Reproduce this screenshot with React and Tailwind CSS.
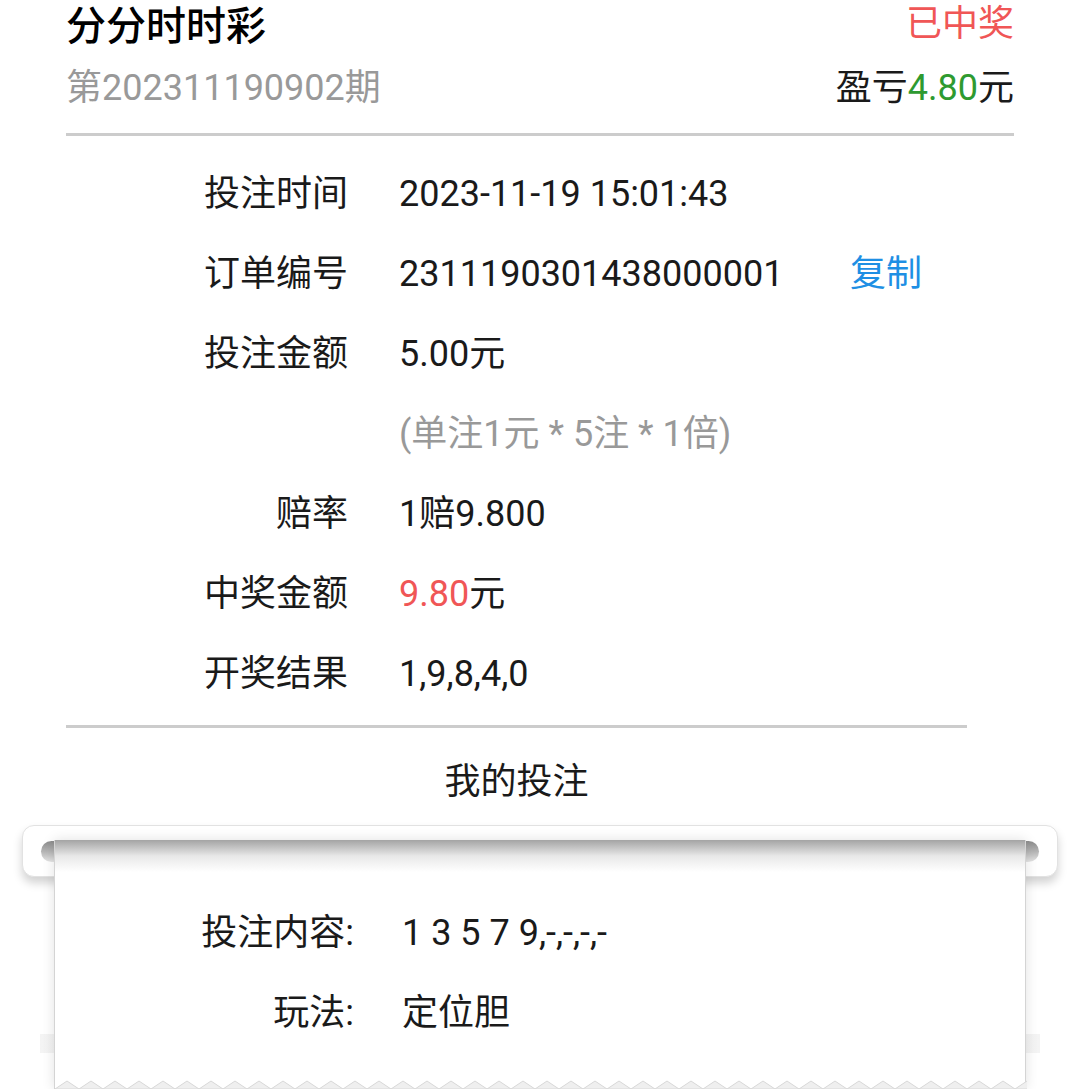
export default function App() {
  const rows = [
    { label: "投注时间", value: "2023-11-19 15:01:43" },
    { label: "订单编号", value: "2311190301438000001", copy: true },
    { label: "投注金额", value: "5.00元" },
    { label: "", value: "(单注1元 * 5注 * 1倍)", muted: true },
    { label: "赔率", value: "1赔9.800" },
    { label: "中奖金额", value: <><span className="text-[#f05656]">9.80</span>元</> },
    { label: "开奖结果", value: "1,9,8,4,0" },
  ];

  const teeth = [];
  for (let i = 0; i < 42; i++) {
    teeth.push(`${i * 24},14 ${i * 24 + 12},6`);
  }

  return (
    <div
      className="w-[1080px] h-[1089px] overflow-hidden bg-white text-[#1a1a1a]"
      style={{ fontFamily: 'Roboto, "Noto Sans CJK SC", sans-serif' }}
    >
      <div className="px-[66px]">
        <div className="flex justify-between">
          <div>
            <div className="h-[54px] flex items-center text-[40px] font-medium text-black leading-none">
              分分时时彩
            </div>
            <div className="h-[68px] flex items-center text-[36px] text-[#999] leading-none">
              第202311190902期
            </div>
          </div>
          <div className="flex flex-col items-end">
            <div className="h-[48px] flex items-center text-[36px] text-[#f05656] leading-none">
              已中奖
            </div>
            <div className="h-[80px] flex items-center text-[36px] leading-none">
              盈亏<span className="text-[#2e9a30]">4.80</span>元
            </div>
          </div>
        </div>
        <div className="mt-[5px] h-[3px] bg-[#cccccc]" />

        <div className="w-[901px]">
          <div className="mt-[18px]">
            {rows.map((r, i) => (
              <div key={i} className="h-[80px] flex items-center text-[36px] leading-none">
                <div className="w-[282px] text-right">{r.label}</div>
                <div className={`ml-[51px] ${r.copy ? "w-[451px]" : ""} ${r.muted ? "text-[#999]" : ""}`}>
                  {r.value}
                </div>
                {r.copy && <div className="text-[#1e8fe4]">复制</div>}
              </div>
            ))}
          </div>
          <div className="mt-[11px] h-[3px] bg-[#cccccc]" />
          <div className="h-[97px] pt-[11px] flex items-center justify-center text-[36px] leading-none">
            我的投注
          </div>
        </div>
      </div>

      <div className="relative px-[22px]">
        <div className="h-[52px] rounded-[12px] border border-[#e2e2e2] bg-white shadow-[0_6px_10px_rgba(0,0,0,0.18)] pt-[15px] px-[18px]">
          <div className="h-[21px] rounded-full bg-gradient-to-b from-[#8c8c8c] via-[#b5b5b5] to-[#e6e6e6]" />
        </div>
        <div className="absolute left-[40px] right-[40px] top-[209px] h-[19px] bg-gradient-to-r from-[#f4f4f4] via-[#d9d9d9] to-[#f4f4f4]" />

        <div className="relative z-10 -mt-[37px] mx-[32px] h-[249px] bg-white border-l border-r border-[#d4d4d4] shadow-[0_0_12px_rgba(0,0,0,0.12)] flex flex-col">
          <div className="h-[32px] -mb-[32px] bg-gradient-to-b from-[#a4a4a4] via-[#e8e8e8] to-white" />
          <div className="pt-[53px]">
            <div className="h-[80px] flex items-center text-[36px] leading-none">
              <div className="w-[299px] text-right">投注内容:</div>
              <div className="ml-[48px]">1 3 5 7 9,-,-,-,-</div>
            </div>
            <div className="h-[79px] flex items-center text-[36px] leading-none">
              <div className="w-[299px] text-right">玩法:</div>
              <div className="ml-[48px]">定位胆</div>
            </div>
          </div>
          <svg className="mt-auto block" width="972" height="14" viewBox="0 0 972 14">
            <polygon
              points={`0,14 ${teeth.join(" ")} 1008,14`}
              fill="#efefef"
              stroke="#d8d8d8"
              strokeWidth="1"
            />
          </svg>
        </div>
      </div>
    </div>
  );
}
